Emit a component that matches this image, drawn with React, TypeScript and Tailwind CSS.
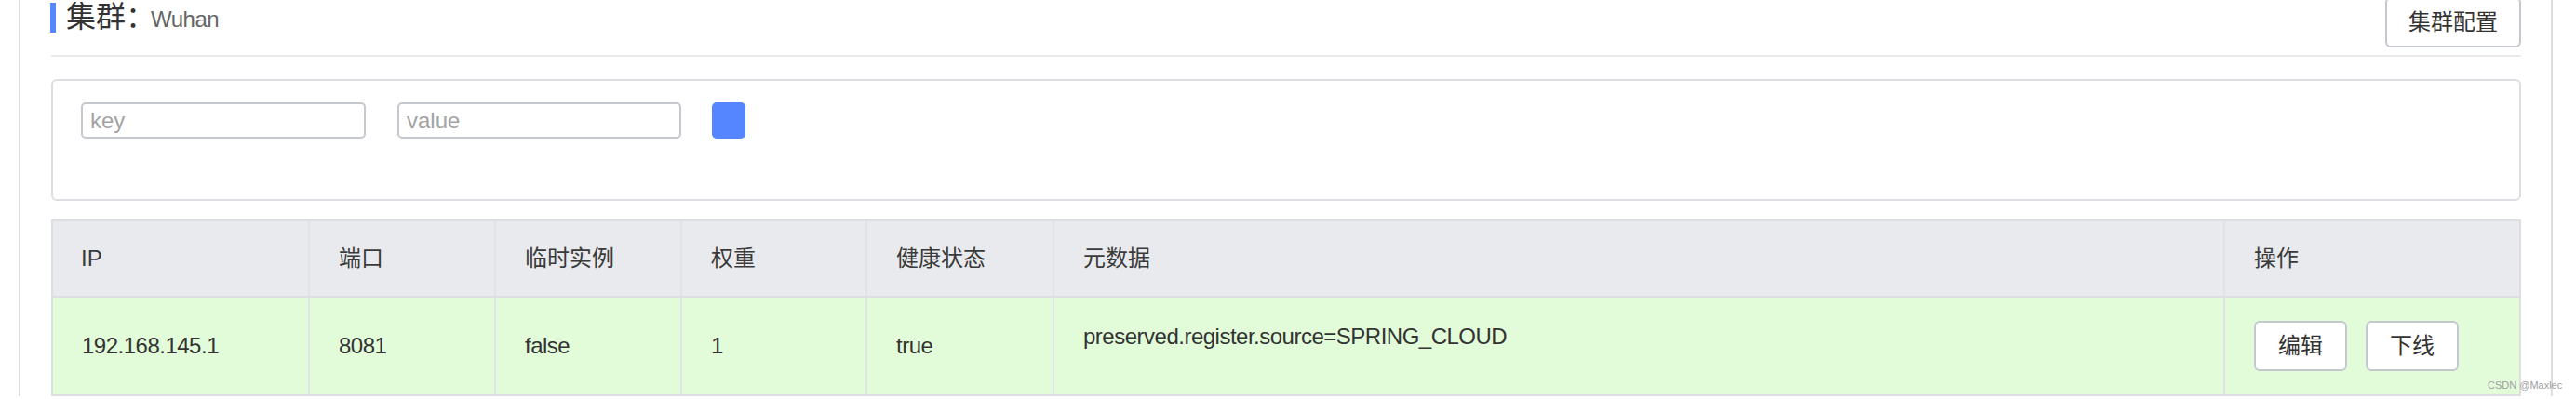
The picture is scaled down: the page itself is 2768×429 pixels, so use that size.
export default function App() {
  const cols = "grid grid-cols-[274px_200px_200px_199px_201px_1258px_318px]";
  const divider = "border-l-2 border-[#e0e2e6]";
  return (
    <div className="relative h-[429px] w-[2768px] overflow-hidden bg-white font-['Liberation_Sans','Noto_Sans_CJK_SC',sans-serif] text-[#333]">
      <div className="ml-[20px] h-full w-[2723px] border-x-2 border-[#dcdee2] pl-[33px] pr-[32px]">
        {/* Title bar */}
        <div className="-mt-[3px] flex items-start justify-between">
          <div className="-ml-[1px] flex h-[44px] items-center">
            <div className="h-[32px] w-[6px] bg-[#5585ff]" />
            <div className="ml-[11px] whitespace-nowrap text-[32px] leading-[44px] text-[#333]">
              集群：<span className="-ml-[5px] text-[24px] tracking-[-0.5px] text-[#666]">Wuhan</span>
            </div>
          </div>
          <button className="flex h-[54px] w-[146px] items-center justify-center rounded-[6px] border-2 border-[#c5c8ce] bg-white text-[24px] text-[#333]">
            集群配置
          </button>
        </div>
        <div className="mt-[8px] h-[2px] bg-[#e8eaec]" />

        {/* Filter box */}
        <div className="mt-[24px] h-[131px] rounded-[6px] border-2 border-[#dcdee2] pl-[30px] pt-[23px]">
          <div className="flex items-start">
            <input
              placeholder="key"
              className="h-[39px] w-[306px] rounded-[5px] border-2 border-[#c5c8ce] bg-white pl-[8px] text-[24px] text-[#333] outline-none placeholder:text-[#a3a3a3]"
            />
            <input
              placeholder="value"
              className="ml-[34px] h-[39px] w-[305px] rounded-[5px] border-2 border-[#c5c8ce] bg-white pl-[8px] text-[24px] text-[#333] outline-none placeholder:text-[#a3a3a3]"
            />
            <button className="ml-[33px] h-[39px] w-[36px] rounded-[5px] bg-[#5585ff]" />
          </div>
        </div>

        {/* Table */}
        <div className="mt-[20px] border-2 border-[#dcdee2]">
          <div className={`${cols} h-[82px] border-b-2 border-[#dcdee2] bg-[#e9eaee] text-[24px] text-[#3a3a3a]`}>
            <div className="flex items-center pl-[30px]">IP</div>
            <div className={`${divider} flex items-center pl-[31px]`}>端口</div>
            <div className={`${divider} flex items-center pl-[31px]`}>临时实例</div>
            <div className={`${divider} flex items-center pl-[31px]`}>权重</div>
            <div className={`${divider} flex items-center pl-[31px]`}>健康状态</div>
            <div className={`${divider} flex items-center pl-[31px]`}>元数据</div>
            <div className={`${divider} flex items-center pl-[31px]`}>操作</div>
          </div>
          <div className={`${cols} h-[104px] bg-[#e2fcda] text-[24px] tracking-[-0.5px] text-[#333]`}>
            <div className="flex items-center pl-[31px]">192.168.145.1</div>
            <div className={`${divider} flex items-center pl-[31px]`}>8081</div>
            <div className={`${divider} flex items-center pl-[31px]`}>false</div>
            <div className={`${divider} flex items-center pl-[31px]`}>1</div>
            <div className={`${divider} flex items-center pl-[31px]`}>true</div>
            <div className={`${divider} flex items-center pb-[20px] pl-[31px]`}>preserved.register.source=SPRING_CLOUD</div>
            <div className={`${divider} flex items-center gap-[20px] pl-[31px] tracking-normal`}>
              <button className="flex h-[54px] w-[100px] items-center justify-center rounded-[6px] border-2 border-[#c5c8ce] bg-white text-[24px] text-[#333]">
                编辑
              </button>
              <button className="flex h-[54px] w-[100px] items-center justify-center rounded-[6px] border-2 border-[#c5c8ce] bg-white text-[24px] text-[#333]">
                下线
              </button>
            </div>
          </div>
        </div>
      </div>
      <div className="absolute left-[2673px] top-[408px] whitespace-nowrap text-[11px] leading-[13px] text-[#a0a0a0]">
        CSDN @Maxlec
      </div>
    </div>
  );
}
